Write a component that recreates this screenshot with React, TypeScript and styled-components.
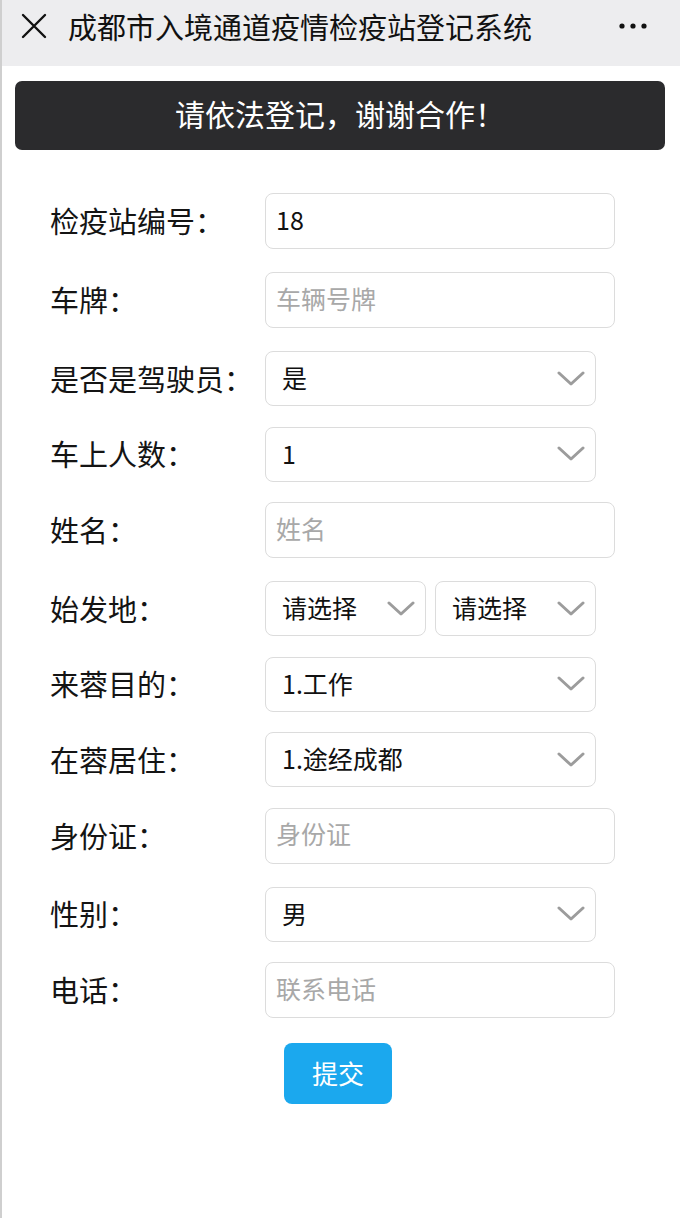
import styled, { createGlobalStyle } from "styled-components";

const GlobalStyle = createGlobalStyle`
  html, body {
    margin: 0;
    padding: 0;
    background: #ffffff;
  }
  body {
    font-family: "Noto Sans CJK SC", "Noto Sans", sans-serif;
    color: #1a1a1a;
  }
`;

const FONT = `"Noto Sans CJK SC", "Noto Sans", sans-serif`;

const Page = styled.div`
  width: 680px;
  min-height: 1218px;
  box-sizing: border-box;
  border-left: 2px solid #cfcfcf;
  background: #ffffff;
`;

const TopBar = styled.div`
  height: 66px;
  background: #ededef;
  display: flex;
  align-items: center;
  padding: 0 33px 0 18px;
  box-sizing: border-box;
`;

const Title = styled.div`
  flex: 1;
  font-size: 29px;
  color: #111;
  margin-left: 20px;
  margin-top: -14px;
  white-space: nowrap;
`;

const IconBox = styled.div`
  display: flex;
  align-items: center;
  margin-top: -14px;
`;

const Banner = styled.div`
  margin: 15px 15px 0 13px;
  height: 69px;
  box-sizing: border-box;
  padding-bottom: 5px;
  border-radius: 7px;
  background: #2b2b2d;
  color: #ffffff;
  font-size: 30px;
  display: flex;
  align-items: center;
  justify-content: center;
`;

const Form = styled.form`
  padding: 43px 0 0 48px;
  display: flex;
  flex-direction: column;
`;

const Row = styled.div<{ $gap: number }>`
  display: flex;
  align-items: center;
  margin-bottom: ${(p) => p.$gap}px;
`;

const Label = styled.label`
  width: 215px;
  font-size: 29px;
  color: #141414;
  white-space: nowrap;
  margin-top: -2px;
`;

const TextInput = styled.input`
  width: 350px;
  height: 56px;
  box-sizing: border-box;
  border: 1.5px solid #dcdcdc;
  border-radius: 8px;
  padding: 0 10px 5px;
  font-family: ${FONT};
  font-size: 25px;
  color: #111;
  background: #fff;
  outline: none;
  &::placeholder {
    color: #a8a8a8;
  }
`;

const SelectGroup = styled.div`
  display: flex;
  gap: 9px;
`;

const SelectWrap = styled.div<{ $w: number }>`
  position: relative;
  width: ${(p) => p.$w}px;
  height: 55px;
`;

const Select = styled.select`
  appearance: none;
  -webkit-appearance: none;
  width: 100%;
  height: 100%;
  box-sizing: border-box;
  border: 1.5px solid #dcdcdc;
  border-radius: 8px;
  padding: 0 40px 3px 16px;
  font-family: ${FONT};
  font-size: 25px;
  color: #111;
  background: #fff;
  outline: none;
`;

const Chevron = styled.svg`
  position: absolute;
  right: 10px;
  top: 50%;
  margin-top: -8px;
  pointer-events: none;
`;

const ButtonRow = styled.div`
  padding-left: 234px;
  margin-top: 2px;
`;

const Submit = styled.button`
  width: 108px;
  height: 61px;
  border: none;
  border-radius: 8px;
  background: #1ba8ee;
  color: #fff;
  font-family: ${FONT};
  font-size: 26px;
  padding-bottom: 3px;
`;

const Arrow = () => (
  <Chevron width="30" height="16" viewBox="0 0 30 16">
    <path d="M3 2 L15 13 L27 2" fill="none" stroke="#9c9c9c" strokeWidth="3" strokeLinecap="round" strokeLinejoin="round" />
  </Chevron>
);

type Field =
  | { kind: "input"; label: string; value?: string; placeholder?: string }
  | { kind: "select"; label: string; options: string[] };

const fields: Field[] = [
  { kind: "input", label: "检疫站编号：", value: "18" },
  { kind: "input", label: "车牌：", placeholder: "车辆号牌" },
  { kind: "select", label: "是否是驾驶员：", options: ["是"] },
  { kind: "select", label: "车上人数：", options: ["1"] },
  { kind: "input", label: "姓名：", placeholder: "姓名" },
  { kind: "select", label: "始发地：", options: ["请选择", "请选择"] },
  { kind: "select", label: "来蓉目的：", options: ["1.工作"] },
  { kind: "select", label: "在蓉居住：", options: ["1.途经成都"] },
  { kind: "input", label: "身份证：", placeholder: "身份证" },
  { kind: "select", label: "性别：", options: ["男"] },
  { kind: "input", label: "电话：", placeholder: "联系电话" },
];

export default function App() {
  return (
    <>
      <GlobalStyle />
      <Page>
        <TopBar>
          <IconBox>
            <svg width="28" height="28" viewBox="0 0 28 28">
              <path d="M3 3 L25 25 M25 3 L3 25" stroke="#111" strokeWidth="2.4" strokeLinecap="round" />
            </svg>
          </IconBox>
          <Title>成都市入境通道疫情检疫站登记系统</Title>
          <IconBox>
            <svg width="28" height="8" viewBox="0 0 28 8">
              <circle cx="3" cy="4" r="2.6" fill="#111" />
              <circle cx="14" cy="4" r="2.6" fill="#111" />
              <circle cx="25" cy="4" r="2.6" fill="#111" />
            </svg>
          </IconBox>
        </TopBar>
        <Banner>请依法登记，谢谢合作！</Banner>
        <Form onSubmit={(e) => e.preventDefault()}>
          {fields.map((f, i) => (
            <Row key={i} $gap={f.kind === "input" ? 23 : 20.5}>
              <Label>{f.label}</Label>
              {f.kind === "input" ? (
                <TextInput defaultValue={f.value} placeholder={f.placeholder} />
              ) : f.options.length > 1 ? (
                <SelectGroup>
                  {f.options.map((o, j) => (
                    <SelectWrap key={j} $w={161}>
                      <Select defaultValue={o}>
                        <option>{o}</option>
                      </Select>
                      <Arrow />
                    </SelectWrap>
                  ))}
                </SelectGroup>
              ) : (
                <SelectWrap $w={331}>
                  <Select defaultValue={f.options[0]}>
                    <option>{f.options[0]}</option>
                  </Select>
                  <Arrow />
                </SelectWrap>
              )}
            </Row>
          ))}
          <ButtonRow>
            <Submit type="submit">提交</Submit>
          </ButtonRow>
        </Form>
      </Page>
    </>
  );
}
